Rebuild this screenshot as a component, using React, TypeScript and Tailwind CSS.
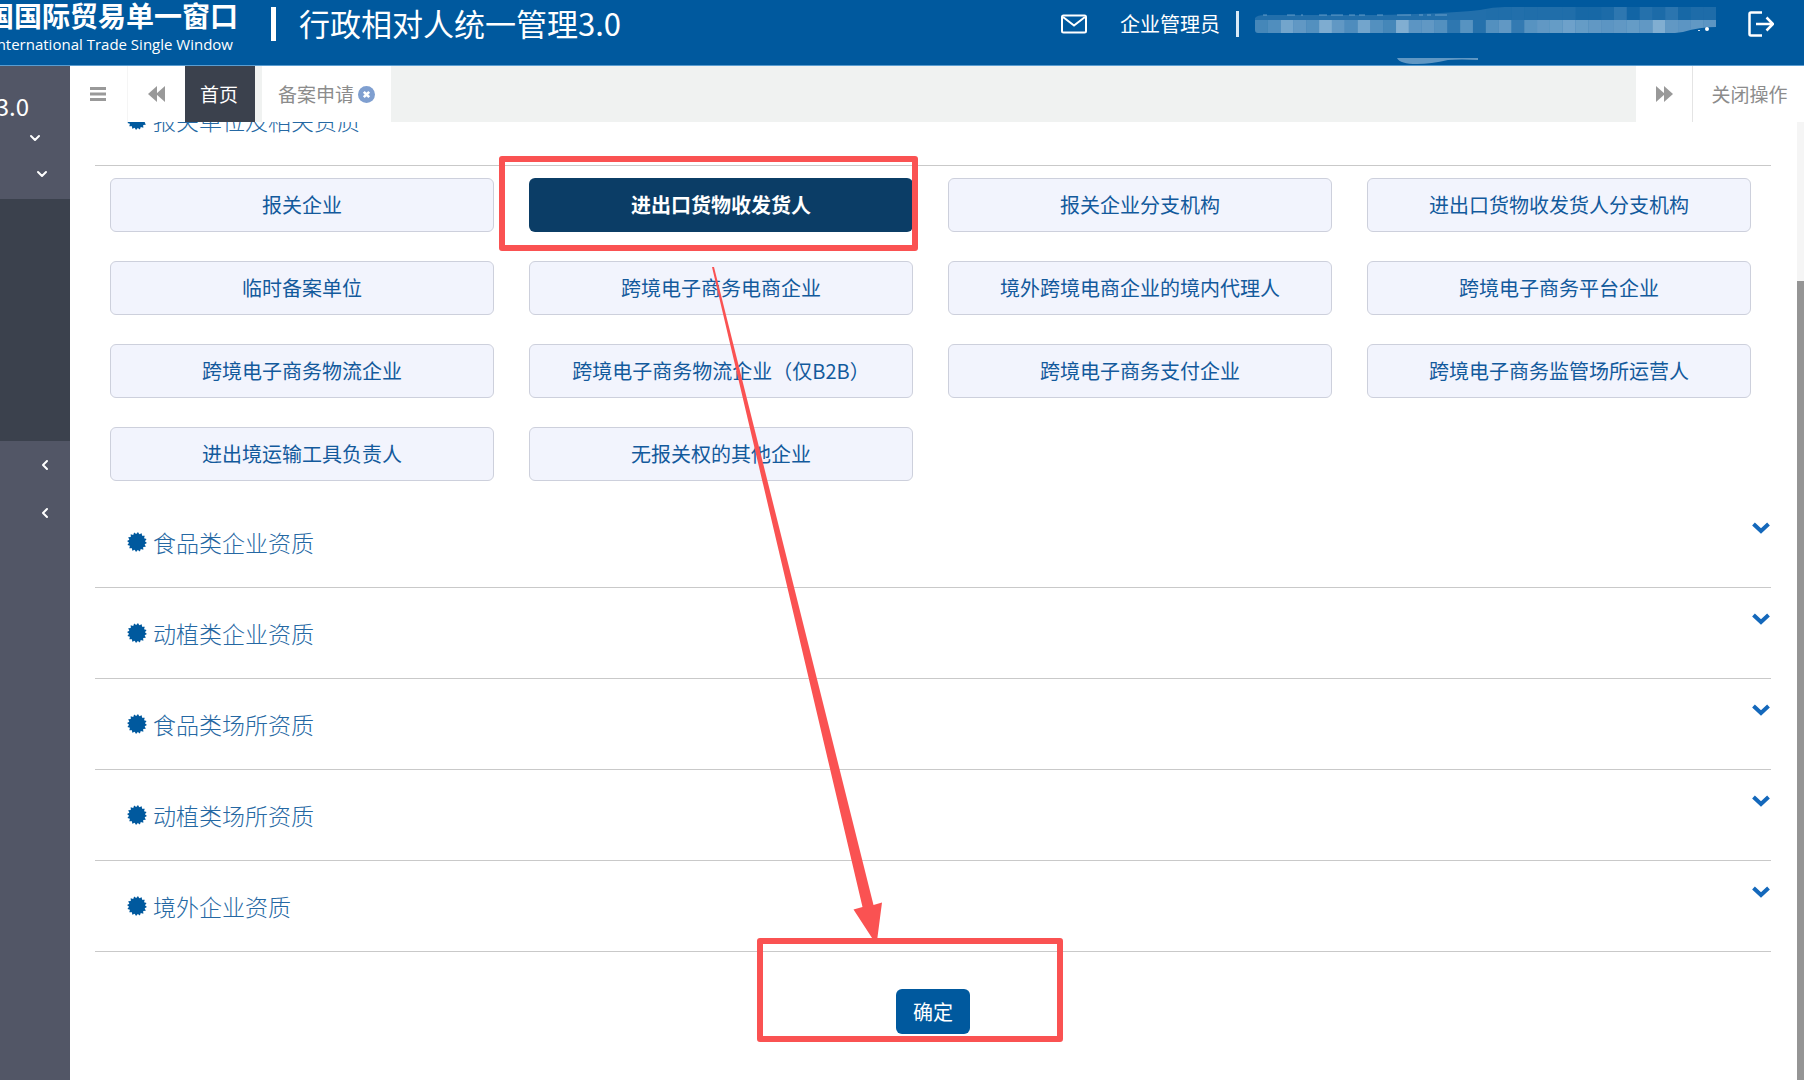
import React, { useState } from 'react';
import { ChevronDown, ChevronLeft } from 'lucide-react';

const QUALIFICATIONS = [
  '报关企业',
  '进出口货物收发货人',
  '报关企业分支机构',
  '进出口货物收发货人分支机构',
  '临时备案单位',
  '跨境电子商务电商企业',
  '境外跨境电商企业的境内代理人',
  '跨境电子商务平台企业',
  '跨境电子商务物流企业',
  '跨境电子商务物流企业（仅B2B）',
  '跨境电子商务支付企业',
  '跨境电子商务监管场所运营人',
  '进出境运输工具负责人',
  '无报关权的其他企业',
];

const SECTIONS = [
  '食品类企业资质',
  '动植类企业资质',
  '食品类场所资质',
  '动植类场所资质',
  '境外企业资质',
];

// Opacity of each block in the masked company name
const MASK_LOWER = [
  0.3, 0.35, 0.5, 0.42, 0.36, 0.55, 0.42, 0.34, 0.5, 0.36, 0.3, 0.56, 0.4, 0.42, 0.36, 0.2, 0.38, 0.16,
  0.36, 0.42, 0.22, 0.38, 0.42, 0.44, 0.48, 0.44, 0.42, 0.4, 0.42, 0.44, 0.42, 0.56, 0.42, 0.4, 0.42, 0.4,
];
const MASK_UPPER = [
  0.14, 0.14, 0.15, 0.14, 0.14, 0.14, 0.14, 0.1, 0.1, 0.12, 0.2, 0.08, 0.16, 0.12, 0.19, 0.1, 0.13, 0.13,
];

const certificatePoints = Array.from({ length: 32 }, (_, i) => {
  const r = i % 2 === 0 ? 10 : 8;
  const a = (i * Math.PI) / 16 + Math.PI / 32;
  return `${(10 + r * Math.cos(a)).toFixed(2)},${(10 + r * Math.sin(a)).toFixed(2)}`;
}).join(' ');

const CertificateIcon: React.FC = () => (
  <svg width="20" height="20" viewBox="0 0 20 20" className="text-[#00599e]" aria-hidden="true">
    <polygon points={certificatePoints} fill="currentColor" />
  </svg>
);

const MaskedName: React.FC = () => (
  <svg width="461" height="48" viewBox="0 0 461 48" className="overflow-visible" aria-hidden="true">
    <defs>
      <clipPath id="upper">
        <path d="M0 20 L0 18 Q2 15 10 15 L120 15 Q190 14 225 10 Q238 7 250 7 H461 V20 Z" />
      </clipPath>
      <clipPath id="lower">
        <path d="M0 20 H461 V27 Q445 27 428 32 L420 33 H3 Q0 33 0 30 Z" />
      </clipPath>
    </defs>
    <g clipPath="url(#upper)" fill="#e6f1fa">
      <rect x="0" y="7" width="231" height="13" opacity="0.15" />
      {MASK_UPPER.map((opacity, i) => (
        <rect key={i} x={231 + i * 12.8} y="7" width="12.8" height="13" opacity={opacity} />
      ))}
    </g>
    <g clipPath="url(#lower)" fill="#e6f1fa">
      {MASK_LOWER.map((opacity, i) => (
        <rect key={i} x={i * 12.82} y="20" width="12.82" height="13" opacity={opacity} />
      ))}
    </g>
    <path
      d="M8 15h4M32 15h8M46 15h2M64 15h8M76 15h12M94 15h6M104 15h6M122 15h6M142 15h14M164 15h4M172 15h4M180 15h12"
      stroke="#9cc3e2"
      strokeWidth="1"
      opacity="0.6"
    />
    <path d="M443 30.500h2" stroke="#cfe2f2" />
    <circle cx="452" cy="29" r="2" fill="#ffffff" />
    <path d="M142 58H223V60Q206 59 193 60Q176 64 162 64Q145 64 142 58Z" fill="#e6f1fa" opacity="0.42" />
  </svg>
);

const Header: React.FC = () => (
  <header className="h-[66px] shrink-0 border-b border-[#5b9dd0] bg-[#00599e] text-white">
    <div className="flex h-12 items-center">
      <div className="flex w-[238px] shrink-0 flex-col items-end self-start overflow-hidden whitespace-nowrap">
        <span className="text-[28px] leading-[30px] font-bold">国国际贸易单一窗口</span>
        <span className="pr-[5px] font-['Open_Sans'] text-[15px] leading-7">International Trade Single Window</span>
      </div>
      <div className="ml-[33px] h-[34px] w-[5px] shrink-0 bg-white" />
      <h1 className="ml-[23px] pb-0.5 text-[31px] leading-10 whitespace-nowrap">行政相对人统一管理3.0</h1>

      <div className="ml-auto flex items-center pr-[30px] whitespace-nowrap">
        <button aria-label="消息">
          <svg width="26" height="20" viewBox="0 0 26 20" fill="none" stroke="white" strokeWidth="2">
            <rect x="1" y="1.500" width="24" height="17" rx="1.500" />
            <path d="M2 3l11 8.500L24 3" />
          </svg>
        </button>
        <span className="ml-[33px] text-xl">企业管理员</span>
        <div className="mx-4 h-[26px] w-[3px] bg-[#d9eaf7]" />
        <MaskedName />
        <button className="ml-8" aria-label="退出">
          <svg width="26" height="26" viewBox="0 0 26 26" fill="none" stroke="white" strokeWidth="2.500">
            <path d="M14 1.500H3Q1.500 1.500 1.500 3V23Q1.500 24.500 3 24.500H14" />
            <path d="M8 13H25M18.500 6.500L25 13l-6.500 6.500" />
          </svg>
        </button>
      </div>
    </div>
  </header>
);

const Sidebar: React.FC = () => (
  <aside className="flex w-[70px] shrink-0 flex-col bg-[#525666] text-white">
    <div className="flex h-[133px] flex-col overflow-hidden pt-5">
      <div className="flex h-11 w-[29px] justify-end text-2xl leading-10">3.0</div>
      <button className="flex h-4 w-[43px] justify-end" aria-label="展开菜单">
        <ChevronDown size={16} strokeWidth={3} />
      </button>
      <button className="mt-5 flex h-4 w-[50px] justify-end" aria-label="展开子菜单">
        <ChevronDown size={16} strokeWidth={3} />
      </button>
    </div>
    <div className="h-[242px] bg-[#3b414d]" />
    <button className="flex h-12 items-center justify-end pr-[17px]" aria-label="菜单一">
      <ChevronLeft size={16} strokeWidth={3} />
    </button>
    <button className="flex h-12 items-center justify-end pr-[17px]" aria-label="菜单二">
      <ChevronLeft size={16} strokeWidth={3} />
    </button>
  </aside>
);

const TabBar: React.FC = () => (
  <nav className="flex h-14 shrink-0 bg-[#f0f2f1] text-[19px] text-[#8c8c8c]">
    <button className="flex w-[58px] items-center justify-center border-r border-[#f5f5f5] bg-white pr-0.5" aria-label="菜单">
      <svg width="16" height="14" viewBox="0 0 16 14" fill="#999999">
        <path d="M0 0h16v3H0zM0 5.500h16v3H0zM0 11h16v3H0z" />
      </svg>
    </button>
    <button className="flex w-[57px] items-center justify-center bg-white" aria-label="向左">
      <svg width="17" height="16" viewBox="0 0 17 16" fill="#999999">
        <path d="M9 0v16L0 8zM17 0v16L8 8z" />
      </svg>
    </button>
    <button className="w-[70px] bg-[#3b414d] pr-0.5 text-white">首页</button>
    <div className="ml-[7px] flex w-[129px] items-center justify-center gap-1 bg-white">
      <button className="whitespace-nowrap">备案申请</button>
      <button aria-label="关闭">
        <svg width="17" height="17" viewBox="0 0 17 17">
          <circle cx="8.500" cy="8.500" r="8.500" fill="#7f9fd0" />
          <path d="M5.800 5.800l5.400 5.400M11.200 5.800l-5.400 5.400" stroke="white" strokeWidth="2.600" />
        </svg>
      </button>
    </div>
    <button className="ml-auto flex w-[57px] items-center justify-center border-r border-[#e4e4e4] bg-white" aria-label="向右">
      <svg width="17" height="16" viewBox="0 0 17 16" fill="#999999">
        <path d="M0 0v16l9-8zM8 0v16l9-8z" />
      </svg>
    </button>
    <button className="w-[111px] bg-white pl-0.5 whitespace-nowrap">关闭操作</button>
  </nav>
);

interface SectionHeadingProps {
  title: string;
  collapsed?: boolean;
}

const SectionHeading: React.FC<SectionHeadingProps> = ({ title, collapsed = false }) => (
  <div className="flex h-[91px] items-center justify-between border-b border-[#c9c9c9] pl-8">
    <h2 className="flex items-center gap-1.5 text-[23px] leading-8 font-light text-[#2568a3]">
      <CertificateIcon />
      {title}
    </h2>
    {collapsed && (
      <button className="mt-6 mr-px self-start" aria-label={`展开${title}`}>
        <svg width="18" height="14" viewBox="0 0 18 14" fill="none" stroke="#1468bb" strokeWidth="4">
          <path d="M1.500 3L9 10l7.500-7" />
        </svg>
      </button>
    )}
  </div>
);

// Highlight frames and pointer drawn over the page
const Annotations: React.FC = () => (
  <svg
    width="1804"
    height="1080"
    viewBox="0 0 1804 1080"
    className="pointer-events-none absolute top-0 left-0"
    aria-hidden="true"
  >
    <g fill="none" stroke="#fa5252" strokeWidth="6" strokeLinejoin="round">
      <rect x="502" y="159" width="413" height="89" />
      <rect x="760" y="941" width="300" height="98" />
    </g>
    <path d="M712 267L714 267L873.500 905L882 902.500L877 941H874L853.500 909.500L862.500 907Z" fill="#fa5252" />
  </svg>
);

const App: React.FC = () => {
  const [selected, setSelected] = useState('进出口货物收发货人');

  return (
    <div className="relative flex h-screen flex-col overflow-hidden bg-white font-['Noto_Sans_CJK_SC',sans-serif]">
      <Header />
      <div className="flex min-h-0 flex-1">
        <Sidebar />
        <div className="flex min-w-0 flex-1 flex-col">
          <TabBar />
          <div className="flex min-h-0 flex-1">
            <main className="min-w-0 flex-1 overflow-hidden pr-[26px] pl-[25px]">
              <div className="-mt-[47px]">
                <SectionHeading title="报关单位及相关资质" />
                <div className="grid grid-cols-4 gap-x-[35px] gap-y-[29px] pt-3 pr-5 pb-4 pl-[15px]">
                  {QUALIFICATIONS.map((name) => (
                    <button
                      key={name}
                      onClick={() => setSelected(name)}
                      className={
                        name === selected
                          ? 'h-[54px] rounded-md bg-[#0b3d66] text-xl font-bold whitespace-nowrap text-white'
                          : 'h-[54px] rounded-md border border-[#cdd0dc] bg-[#f2f4fd] text-xl whitespace-nowrap text-[#135a9c]'
                      }
                    >
                      {name}
                    </button>
                  ))}
                </div>
                {SECTIONS.map((title) => (
                  <SectionHeading key={title} title={title} collapsed />
                ))}
                <div className="flex justify-center pt-[37px]">
                  <button className="h-[45px] w-[74px] rounded-md bg-[#00599e] text-xl text-white">确定</button>
                </div>
              </div>
            </main>
            <div className="w-[7px] shrink-0 bg-[#f5f5f5] pt-[159px]">
              <div className="h-full bg-[#959595]" />
            </div>
          </div>
        </div>
      </div>
      <Annotations />
    </div>
  );
};

export default App;
